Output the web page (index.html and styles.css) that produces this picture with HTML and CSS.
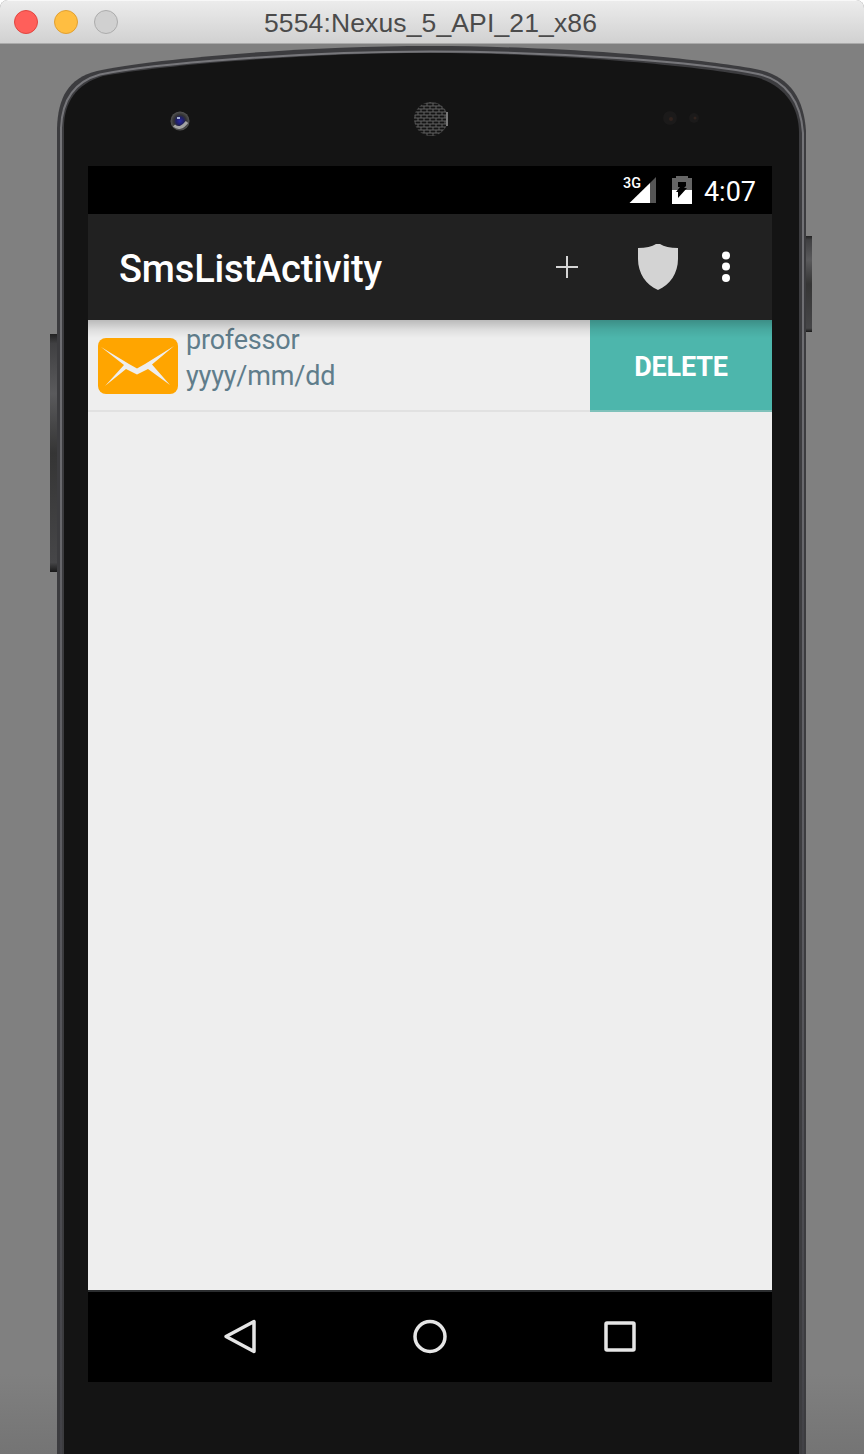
FILE: index.html
```html
<!DOCTYPE html>
<html lang="en">
<head>
<meta charset="utf-8">
<title>5554:Nexus_5_API_21_x86</title>
<link rel="stylesheet" href="styles.css">
</head>
<body>
<div class="window">
  <header class="titlebar">
    <div class="lights"><i class="light red"></i><i class="light amber"></i><i class="light gray"></i></div>
    <span class="window-title">5554:Nexus_5_API_21_x86</span>
  </header>
  <div class="desktop">
    <svg class="shell" viewBox="0 44 864 1410" aria-hidden="true">
      <defs>
        <linearGradient id="key" x1="0" y1="0" x2="0" y2="1"><stop offset="0" stop-color="#222"/><stop offset=".04" stop-color="#404042"/><stop offset=".25" stop-color="#5a5a5c"/><stop offset=".5" stop-color="#353535"/><stop offset=".96" stop-color="#464648"/><stop offset="1" stop-color="#181818"/></linearGradient>
        <linearGradient id="rim" x1="0" y1="0" x2="0" y2="1"><stop offset="0" stop-color="#77777b"/><stop offset=".6" stop-color="#5b5b60"/><stop offset="1" stop-color="#414146"/></linearGradient>
        <pattern id="mesh" width="6" height="6" patternUnits="userSpaceOnUse"><path d="M0 1H6M0 4H6M1 1V4M4 4V7M4 0V1" stroke="#5f5f5f" fill="none"/></pattern>
        <radialGradient id="lens"><stop offset="0" stop-color="#2929a5"/><stop offset=".4" stop-color="#202064"/><stop offset=".65" stop-color="#333"/><stop offset="1" stop-color="#555"/></radialGradient>
      </defs>
      <rect x="50" y="334" width="8" height="238" fill="url(#key)"/>
      <rect x="804" y="236" width="8" height="96" fill="url(#key)"/>
      <path d="M57 1460V128C58 98 68 78 97 71C151 59 300 46 430 46S700 58 760 70C790 77 804 99 806 131V1460Z" fill="#3c3c3f"/>
      <path d="M61 1460V128C62 101 73 82 100 74.500C151 64 300 51.500 430 51.500S700 62 758 74C786 80 801 102 803 133V1460" fill="none" stroke="url(#rim)" stroke-width="2"/>
      <path d="M64 1460V127C64 103 76 84 103 76C155 66 300 53 430 53S700 66 755 77C783 84 799 105 799 133V1460Z" fill="#141414"/>
      <circle cx="180" cy="121" r="9.500" fill="url(#lens)"/>
      <path d="M174 125.500Q180 131 187 122" fill="none" stroke="#a3a3a3" stroke-width="3"/>
      <path d="M177 117h3v2h-3z" fill="#a9b4d6"/>
      <circle cx="431" cy="119" r="17" fill="url(#mesh)"/>
      <path d="M447 112V126" stroke="#777" stroke-width="2"/>
      <circle cx="670" cy="118" r="7" fill="#1b1a1a"/><circle cx="671" cy="119" r="2" fill="#30221d"/>
      <circle cx="694" cy="118" r="5" fill="#1b1a1a"/><circle cx="695" cy="118" r="1.500" fill="#30231e"/>
    </svg>
    <main class="screen">
      <div class="statusbar">
        <svg class="signal" width="34" height="30" viewBox="0 0 34 30">
          <text class="network" x="0" y="13" textLength="18" lengthAdjust="spacingAndGlyphs">3G</text>
          <path d="M33 2V28H27V8Z" fill="#555"/><path d="M27 8V28H6.500Z" fill="#fff"/>
        </svg>
        <svg class="battery" width="20" height="28" viewBox="0 0 20 28">
          <path d="M0 2H4V0H16V2H20V14H0Z" fill="#666"/><path d="M0 14H20V28H0Z" fill="#fff"/>
          <path d="M6 6H14V10L12 12H15L6 22V16H4L8 11H6Z" fill="#000"/>
        </svg>
        <span class="clock">4:07</span>
      </div>
      <div class="actionbar">
        <h1 class="title">SmsListActivity</h1>
        <svg class="add" width="22" height="22" viewBox="0 0 22 22"><path d="M0 11H22M11 0V22" stroke="#d5d5d5" stroke-width="2"/></svg>
        <svg class="shield" width="40" height="46" viewBox="0 0 40 46"><path d="M0 4Q12 4 18 0H22Q28 4 40 4V15C40 29 32 41 20 46C8 41 0 29 0 15Z" fill="#d3d3d3"/></svg>
        <svg class="more" width="8" height="32" viewBox="0 0 8 32"><g fill="#fff"><circle cx="4" cy="4.500" r="4"/><circle cx="4" cy="15.500" r="4"/><circle cx="4" cy="27" r="4"/></g></svg>
      </div>
      <section class="list">
        <article class="row">
          <svg class="mail" width="80" height="56" viewBox="0 0 80 56">
            <rect width="80" height="56" rx="8" fill="#ffa500"/>
            <path d="M3 9L31 26L39 30.500L47 26L76 8L54 26.500L72 47L50 31L39 36.500L28 31L7 48L26 27Z" fill="#eee"/>
          </svg>
          <div class="message"><span>professor</span><span>yyyy/mm/dd</span></div>
          <button class="delete">DELETE</button>
        </article>
      </section>
      <nav class="navbar">
        <svg width="36" height="38" viewBox="0 0 36 38"><path d="M4 18.500L32 3.500V33.500Z"/></svg>
        <svg width="36" height="38" viewBox="0 0 36 38"><circle cx="18" cy="18.500" r="15"/></svg>
        <svg width="36" height="38" viewBox="0 0 36 38"><rect x="4" y="5" width="28" height="27" rx="1"/></svg>
      </nav>
    </main>
  </div>
</div>
</body>
</html>
```
FILE: styles.css
```css
* { box-sizing: border-box; }
body { margin: 0; background: #fff; font-family: Roboto, sans-serif; }
.window { width: 864px; height: 1454px; overflow: hidden; display: flex; flex-direction: column; border-radius: 8px 8px 0 0; background: #808080; }
.titlebar { height: 44px; flex: none; display: grid; grid-template-columns: 132px 1fr 135px; align-items: center; background: linear-gradient(#ececec, #d1d1d1); border-top: 1px solid #f8f8f8; border-bottom: 1px solid #aaa; }
.lights { display: flex; gap: 16px; padding-left: 14px; }
.light { width: 24px; height: 24px; border-radius: 50%; border: 1px solid; }
.red { background: #ff5f5a; border-color: #e14640; }
.amber { background: #ffbe41; border-color: #e1a032; }
.gray { background: #d0d0d0; border-color: #acacac; }
.window-title { font: 26.5px/40px "Liberation Sans", sans-serif; letter-spacing: .13px; color: #4b4b4b; text-align: center; white-space: nowrap; padding-top: 1px; }
.desktop { position: relative; flex: 1; padding: 122px 92px 72px 88px; background: linear-gradient(#808080 0 1330px, #747474); }
.shell { position: absolute; left: 0; top: 0; width: 864px; height: 1410px; }
.screen { position: relative; width: 684px; height: 1216px; display: flex; flex-direction: column; background: #eee; }
.statusbar { height: 48px; flex: none; background: #000; color: #fff; display: flex; align-items: center; justify-content: flex-end; padding-right: 16px; }
.network { font: 500 15px Roboto, sans-serif; fill: #fff; }
.signal { margin-right: 15px; }
.battery { margin-right: 12px; }
.clock { font-size: 27px; line-height: 48px; padding-top: 3px; }
.actionbar { position: relative; z-index: 1; height: 106px; flex: none; background: #212121; color: #fff; display: flex; align-items: center; padding: 0 42px 0 31px; }
.actionbar::after { content: ""; position: absolute; left: 0; right: 0; top: 100%; height: 18px; background: linear-gradient(rgba(0,0,0,.22), rgba(0,0,0,.07) 55%, transparent); }
.title { margin: 3px auto 0 0; font-size: 38px; font-weight: 500; line-height: 48px; letter-spacing: -.15px; }
.add { margin-right: 60px; }
.shield { margin-right: 44px; }
.list { flex: 1; }
.row { height: 92px; display: flex; border-bottom: 2px solid #e1e1e1; padding-left: 10px; }
.mail { margin-top: 18px; }
.message { display: flex; flex-direction: column; margin-left: 8px; font-size: 27px; line-height: 36px; letter-spacing: -.2px; padding-top: 2px; color: #607d8b; }
.delete { width: 182px; height: 92px; margin: 0 0 0 auto; padding: 2px 0 0; border: 0; border-bottom: 2px solid #7fc1ba; background: #4db6ac; color: #fff; font: bold 27px/90px Roboto, sans-serif; letter-spacing: -.2px; }
.navbar { height: 92px; flex: none; display: flex; justify-content: space-between; align-items: center; padding: 0 134px; background: #000; border-top: 2px solid #2b2d2f; }
.navbar svg { fill: none; stroke: #e6e6e6; stroke-width: 3.5; stroke-linejoin: round; }
```
